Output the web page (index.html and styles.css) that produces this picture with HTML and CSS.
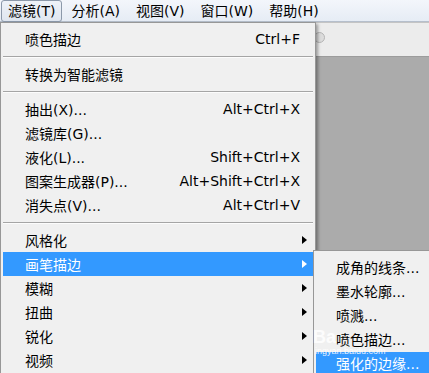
FILE: index.html
```html
<!DOCTYPE html>
<html lang="zh-CN">
<head>
<meta charset="utf-8">
<link rel="stylesheet" href="styles.css">
</head>
<body>
<div class="app">
  <div class="menubar">
    <span class="mb-item active">滤镜(T)</span>
    <span class="mb-item">分析(A)</span>
    <span class="mb-item">视图(V)</span>
    <span class="mb-item">窗口(W)</span>
    <span class="mb-item">帮助(H)</span>
  </div>
  <div class="workspace">
    <div class="optionsbar"><span class="knob"></span></div>
    <div class="canvas"></div>
  </div>

  <div class="dropdown">
    <div class="mi"><span class="label">喷色描边</span><span class="sc">Ctrl+F</span></div>
    <div class="sep"></div>
    <div class="mi"><span class="label">转换为智能滤镜</span></div>
    <div class="sep"></div>
    <div class="mi"><span class="label">抽出(X)...</span><span class="sc">Alt+Ctrl+X</span></div>
    <div class="mi"><span class="label">滤镜库(G)...</span></div>
    <div class="mi"><span class="label">液化(L)...</span><span class="sc">Shift+Ctrl+X</span></div>
    <div class="mi"><span class="label">图案生成器(P)...</span><span class="sc">Alt+Shift+Ctrl+X</span></div>
    <div class="mi"><span class="label">消失点(V)...</span><span class="sc">Alt+Ctrl+V</span></div>
    <div class="sep"></div>
    <div class="mi sub"><span class="label">风格化</span><span class="arrow"></span></div>
    <div class="mi sub hl"><span class="label">画笔描边</span><span class="arrow"></span></div>
    <div class="mi sub"><span class="label">模糊</span><span class="arrow"></span></div>
    <div class="mi sub"><span class="label">扭曲</span><span class="arrow"></span></div>
    <div class="mi sub"><span class="label">锐化</span><span class="arrow"></span></div>
    <div class="mi sub"><span class="label">视频</span><span class="arrow"></span></div>
  </div>

  <div class="submenu">
    <div class="si"><span class="label">成角的线条...</span></div>
    <div class="si"><span class="label">墨水轮廓...</span></div>
    <div class="si"><span class="label">喷溅...</span></div>
    <div class="si"><span class="label">喷色描边...</span></div>
    <div class="si hl"><span class="label">强化的边缘...</span></div>
  </div>

  <div class="watermark">
    <span class="wm-big">Ba</span>
    <span class="wm-small">ingyan.baidu.com</span>
  </div>
</div>
</body>
</html>
```

FILE: styles.css
```css
html, body {
  margin: 0;
  padding: 0;
}
body {
  width: 429px;
  height: 373px;
  overflow: hidden;
  font-family: "DejaVu Sans", "Noto Sans CJK SC", sans-serif;
  font-size: 14px;
  color: #000;
}
.app {
  position: relative;
  width: 429px;
  height: 373px;
  display: flex;
  flex-direction: column;
  background: #ababab;
}
.menubar {
  height: 21px;
  border-bottom: 1px solid #b6bfcc;
  background: linear-gradient(#f3f6fb, #e6ecf5);
  display: flex;
  align-items: center;
  padding-left: 1px;
  gap: 2px;
}
.mb-item {
  height: 20px;
  line-height: 20px;
  padding: 0 6px;
  border: 1px solid transparent;
  white-space: nowrap;
}
.mb-item.active {
  border-color: #8c99aa;
  border-radius: 3px;
  background: linear-gradient(#eef2f8, #dfe6f0);
}
.workspace {
  flex: 1;
  display: flex;
  flex-direction: column;
}
.optionsbar {
  height: 33px;
  border-top: 1px solid #c4c4c4;
  border-bottom: 1px solid #9c9c9c;
  background: #ececec;
  display: flex;
  align-items: center;
  padding-left: 314px;
}
.knob {
  width: 9px;
  height: 9px;
  border-radius: 50%;
  border: 1px solid #b5b5b5;
  background: #dcdcdc;
  margin-top: -4px;
}
.canvas {
  flex: 1;
  background: #ababab;
}

.dropdown {
  position: absolute;
  left: 0;
  top: 22px;
  width: 316px;
  box-sizing: border-box;
  border: 1px solid #979797;
  border-bottom: none;
  background: #f0f0f0;
  padding-top: 4px;
  box-shadow: 2px 2px 3px rgba(0, 0, 0, 0.35);
  height: 360px;
}
.mi {
  display: flex;
  align-items: center;
  height: 24px;
  margin: 0 2px;
  padding: 0 13px 0 22px;
  white-space: nowrap;
}
.mi .sc {
  margin-left: auto;
}
.mi.sub {
  padding-right: 6px;
}
.arrow {
  margin-left: auto;
  width: 0;
  height: 0;
  border-left: 5px solid #000;
  border-top: 4.5px solid transparent;
  border-bottom: 4.5px solid transparent;
}
.hl {
  background: #3399ff;
  color: #fff;
}
.hl .arrow {
  border-left-color: #fff;
}
.sep {
  height: 1px;
  margin: 5px 2px 4px;
  background: #a5a5a5;
  border-bottom: 1px solid #fcfcfc;
}

.submenu {
  position: absolute;
  left: 313px;
  top: 250px;
  width: 130px;
  height: 140px;
  box-sizing: border-box;
  border: 1px solid #979797;
  background: #f0f0f0;
  padding-top: 5px;
}
.si {
  display: flex;
  align-items: center;
  height: 24px;
  margin: 0 2px;
  padding-left: 20px;
  line-height: 14px;
  white-space: nowrap;
}
.si.hl {
  align-items: flex-start;
  padding-top: 5px;
  box-sizing: border-box;
}

.watermark {
  position: absolute;
  left: 313px;
  top: 328px;
  display: flex;
  flex-direction: column;
  pointer-events: none;
}
.wm-big {
  font-family: "Liberation Sans", sans-serif;
  font-size: 18px;
  font-weight: bold;
  color: rgba(255, 255, 255, 0.85);
  line-height: 19px;
}
.wm-small {
  font-family: "Liberation Sans", sans-serif;
  font-size: 9px;
  color: rgba(255, 255, 255, 0.9);
  line-height: 9px;
  margin-left: 2px;
}
```
